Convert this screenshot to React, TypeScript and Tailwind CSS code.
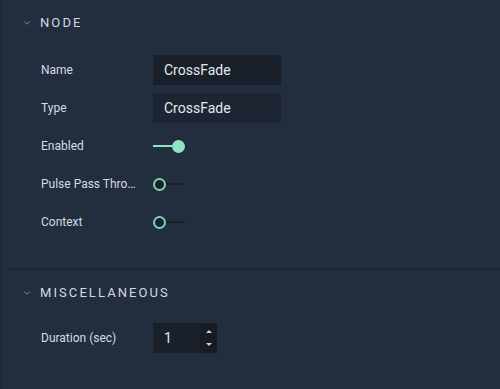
import { ChevronDown } from "lucide-react";

const Row = ({ label, children }: { label: string; children: React.ReactNode }) => (
  <div className="flex items-center h-[38px]">
    <div className="w-[101px] mr-[11px] text-[12px] text-[#d5dbe4] truncate">{label}</div>
    <div className="flex items-center">{children}</div>
  </div>
);

const Toggle = ({ on }: { on: boolean }) =>
  on ? (
    <div className="relative w-[34px] h-[14px] flex items-center">
      <div className="w-[22px] h-[2px] bg-[#8ee3c0]" />
      <div className="absolute left-[19px] w-[13px] h-[13px] rounded-full bg-[#8ee3c0]" />
    </div>
  ) : (
    <div className="relative w-[34px] h-[14px] flex items-center">
      <div className="absolute left-[8px] w-[24px] h-[2px] bg-[#19202a]" />
      <div className="relative w-[13px] h-[13px] rounded-full border-2 border-[#7fd3b2] bg-[#1a212c]" />
    </div>
  );

const Header = ({ title }: { title: string }) => (
  <div className="flex items-center h-[46px] pl-[20px]">
    <ChevronDown size={10} strokeWidth={1.5} className="text-[#c3cad6]" />
    <span className="ml-[8px] text-[13px] tracking-[0.16em] text-[#d3dae4]">{title}</span>
  </div>
);

export default function App() {
  return (
    <div
      className="w-[500px] h-[389px] bg-[#222d3d] border-l-2 border-[#1e2736] overflow-hidden"
      style={{ fontFamily: "Roboto, 'Liberation Sans', sans-serif" }}
    >
      <Header title="NODE" />
      <div className="pl-[39px] pt-[5px] pb-[27px]">
        <Row label="Name">
          <div className="w-[128px] h-[30px] bg-[#1a202a] flex items-center px-[11px] text-[14px] text-[#e3e8ef]">CrossFade</div>
        </Row>
        <Row label="Type">
          <div className="w-[128px] h-[30px] bg-[#1d2532] flex items-center px-[11px] text-[14px] text-[#e3e8ef]">CrossFade</div>
        </Row>
        <Row label="Enabled">
          <Toggle on />
        </Row>
        <Row label="Pulse Pass Through">
          <Toggle on={false} />
        </Row>
        <Row label="Context">
          <Toggle on={false} />
        </Row>
      </div>
      <div className="ml-[7px] h-[2px] bg-[#1c2431]" />
      <Header title="MISCELLANEOUS" />
      <div className="pl-[39px] pt-[3px]">
        <Row label="Duration (sec)">
          <div className="w-[64px] h-[30px] bg-[#1a202a] flex">
            <div className="flex-1 flex items-center pl-[11px] text-[14px] text-[#e3e8ef]">1</div>
            <div className="w-[17px] bg-[#161b24] flex flex-col items-center justify-between py-[7px]">
              <div className="w-0 h-0 border-l-[3px] border-r-[3px] border-b-[3px] border-l-transparent border-r-transparent border-b-[#c9d0da]" />
              <div className="w-0 h-0 border-l-[3px] border-r-[3px] border-t-[3px] border-l-transparent border-r-transparent border-t-[#c9d0da]" />
            </div>
          </div>
        </Row>
      </div>
    </div>
  );
}
